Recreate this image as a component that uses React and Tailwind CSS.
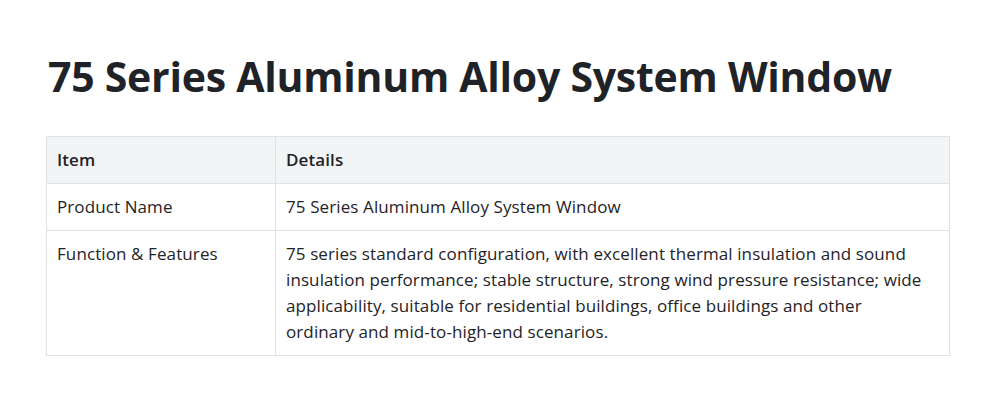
import React from 'react'

const rows = [
  { item: 'Product Name', details: '75 Series Aluminum Alloy System Window' },
  {
    item: 'Function & Features',
    details:
      '75 series standard configuration, with excellent thermal insulation and sound insulation performance; stable structure, strong wind pressure resistance; wide applicability, suitable for residential buildings, office buildings and other ordinary and mid-to-high-end scenarios.',
  },
]

export default function App() {
  return (
    <div className='min-h-[403px] bg-white pl-[46px] pt-[50px] text-[#1f2328]' style={{ fontFamily: '"Open Sans", "Noto Sans", sans-serif' }}>
      <h1 className='pl-[2px] text-[41px] font-bold leading-[52px] tracking-[-0.25px]'>75 Series Aluminum Alloy System Window</h1>
      <table className='mt-[34px] w-[904px] border-collapse text-[17px] leading-[26px] tracking-[0.1px]'>
        <thead>
          <tr className='bg-[#f3f4f6]'>
            <th className='w-[229px] border border-[#dfe1e5] px-[10px] py-[10px] text-left font-semibold'>Item</th>
            <th className='border border-[#dfe1e5] py-[10px] pl-[10px] pr-[20px] text-left font-semibold'>Details</th>
          </tr>
        </thead>
        <tbody>
          {rows.map((r) => (
            <tr key={r.item}>
              <td className='border border-[#dfe1e5] px-[10px] py-[10px] align-top'>{r.item}</td>
              <td className='border border-[#dfe1e5] py-[10px] pl-[10px] pr-[20px] align-top'>{r.details}</td>
            </tr>
          ))}
        </tbody>
      </table>
    </div>
  )
}
